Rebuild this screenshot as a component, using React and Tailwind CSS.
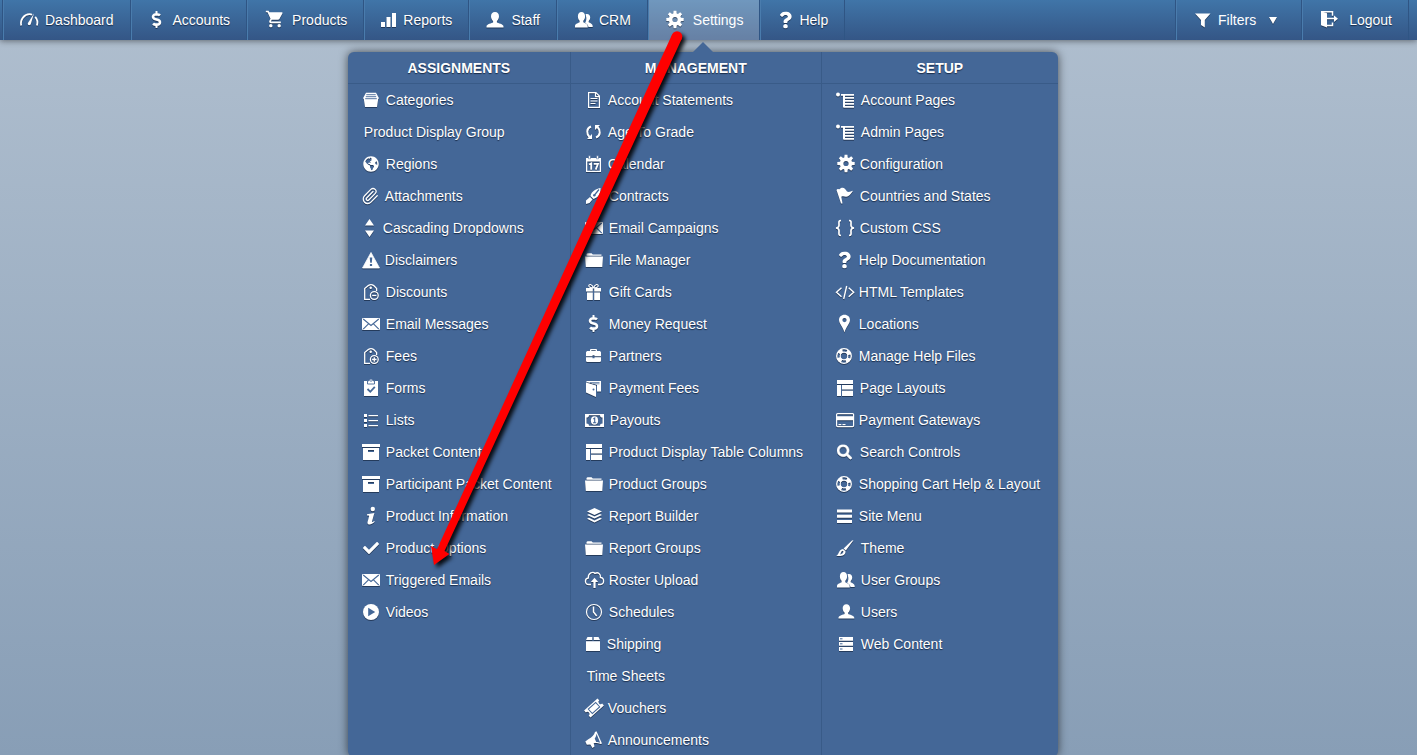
import React from "react";
import { Paperclip } from "lucide-react";
import {
  FaQuestion,
  FaDollarSign,
  FaCheck,
  FaGlobeAmericas,
  FaSearch,
} from "react-icons/fa";
import { MdShoppingCart } from "react-icons/md";

const PANEL = "#446797";

function Gear() {
  return (
    <g>
      <circle cx="9" cy="10" r="4.4" fill="none" stroke="currentColor" strokeWidth="3.6" />
      {[0, 45, 90, 135, 180, 225, 270, 315].map((a) => (
        <path key={a} d="M7.2 4.800L7.600 1.300h2.800L10.800 4.800z" fill="currentColor" transform={`rotate(${a} 9 10)`} />
      ))}
    </g>
  );
}

const PERSON =
  "M9 2c2.600 0 4 1.800 4 4.300 0 2-.9 3.900-2.100 4.800v1.500c1 .8 6.600 1.400 6.600 4v.9H.5v-.9c0-2.600 5.600-3.200 6.600-4v-1.500C5.900 10.200 5 8.300 5 6.300 5 3.800 6.400 2 9 2z";

const TAG = (
  <g>
    <path d="M8 17.300H2.700V6.500L6.300 3.600Q9 1.800 11.700 3.600L14.600 6.500V9" />
    <circle cx="8.700" cy="5.800" r="0.600" />
    <circle cx="12.300" cy="13.500" r="3.900" />
  </g>
);

const glyphs = {
  gauge: [
    18,
    <g key="g" fill="none" stroke="currentColor">
      <path d="M1.200 15.500C-.2 9.500 4.500 4.200 9.500 4.200c1.300 0 2 .2 2.600.5M15.200 6.800c2.200 2.400 2.600 5.800 1.700 8.700" strokeWidth="1.800" />
      <path d="M14 3.500L10.800 14c-.6 1.800-3.400 1.500-3-.7z" fill="currentColor" stroke="none" />
    </g>,
  ],
  dollar: [19, <FaDollarSign key="g" x="0" y="1" size="17" />],
  cart: [20, <MdShoppingCart key="g" x="1" y="-1" size="20" />],
  bars: [
    16,
    <path key="g" d="M0 12h4v5H0zM5.500 7h4v10h-4zM11 3h4v14h-4z" fill="currentColor" />,
  ],
  user: [20, <path key="g" d={PERSON} fill="currentColor" />],
  users: [
    20,
    <g key="g" fill="currentColor">
      <path d="M13 4c2 0 3.200 1.300 3.200 3.500 0 1.500-.6 2.800-1.500 3.500v1.200c.8.700 4 1.300 4 3.800v1h-4.200c-.2-2.600-2.400-3.500-3.600-4.100 1.500-1.400 2-5 .6-8.500.5-.3 1-.4 1.500-.4z" />
      <path d="M7.500 2c2.300 0 3.600 1.700 3.600 4.200 0 1.900-.8 3.700-1.800 4.600v1.500c.9.800 4.400 1.300 4.400 4v1.200H1v-1.200c0-2.700 3.700-3.200 4.600-4v-1.500C4.600 9.900 3.900 8.100 3.900 6.200 3.900 3.700 5.200 2 7.500 2z" />
    </g>,
  ],
  gear: [19, <g key="g" transform="translate(1 -0.500)"><Gear /></g>],
  question: [18, <FaQuestion key="g" x="0" y="1.500" size="17" />],
  funnel: [20, <path key="g" d="M2 3.500h15.500L11.800 10v7.500L8 15v-5z" fill="currentColor" />],
  logout: [
    21,
    <g key="g" fill="none" stroke="currentColor">
      <path d="M2 1.200l6 2v14.300l-6-2.200z" fill="currentColor" stroke="none" />
      <path d="M2 1.700h11.500v4M13.500 12.500v3H8M8 8.500h8.500" strokeWidth="1.500" />
      <path d="M15 5.500l4 3.200-4 3.300z" fill="currentColor" stroke="none" />
    </g>,
  ],
  tray: [
    19,
    <g key="g">
      <path d="M4 2.800h10l3 5.400-.8.800-1.200 8H3L1.800 9 1 8.200z" fill="currentColor" />
      <path d="M4.300 4.700h9.400M3.800 6.700h10.400M3.200 8.700h11.600" stroke={PANEL} strokeWidth="0.900" />
    </g>,
  ],
  globe: [19, <FaGlobeAmericas key="g" x="1" y="2" size="16" />],
  clip: [
    18,
    <g key="g" fill="none" stroke="currentColor">
      <Paperclip x="-1" y="1" width="18" height="18" strokeWidth="1.700" />
    </g>,
  ],
  sort: [16, <path key="g" d="M7.500 1l4.500 6.500H3zM7.500 19L3 12.500h9z" fill="currentColor" />],
  warning: [
    18,
    <g key="g">
      <path d="M9 2.500L17.500 18H.5z" fill="currentColor" stroke="currentColor" strokeWidth="0.800" strokeLinejoin="round" />
      <path d="M7.700 7.500h2.600l-.5 5.200H8.200zM7.900 14h2.200v2H7.900z" fill={PANEL} />
    </g>,
  ],
  tagMinus: [
    19,
    <g key="g" fill="none" stroke="currentColor" strokeWidth="1.300">
      {TAG}
      <path d="M10.200 13.500h4.200" />
    </g>,
  ],
  tagPlus: [
    19,
    <g key="g" fill="none" stroke="currentColor" strokeWidth="1.300">
      {TAG}
      <path d="M10.100 13.500h4.400M12.300 11.300v4.400" />
    </g>,
  ],
  mail: [
    19,
    <g key="g">
      <rect x="0" y="4" width="18" height="12" rx="1" fill="currentColor" />
      <path d="M1.200 5L9 11.500 16.800 5M1.200 15.200l5.300-5.400M16.800 15.200l-5.300-5.400" fill="none" stroke={PANEL} strokeWidth="1.100" />
    </g>,
  ],
  clipboard: [
    19,
    <g key="g">
      <path d="M2 3h14v15H2z" fill="currentColor" />
      <path d="M5.500 2.800h1.600a1.900 1.900 0 0 1 3.800 0h1.600V6h-7z" fill="currentColor" stroke={PANEL} strokeWidth="0.900" />
      <circle cx="9" cy="3" r="0.800" fill={PANEL} />
      <path d="M5.500 11l2.800 2.800 4.500-5" fill="none" stroke={PANEL} strokeWidth="1.800" />
    </g>,
  ],
  list: [
    19,
    <path key="g" d="M2 4h3v3H2zM2 9h3v3H2zM2 14h3v3H2zM6.500 5h9.500v1.200H6.500zM6.500 10h9.500v1.200H6.500zM6.500 15h9.500v1.200H6.500z" fill="currentColor" />,
  ],
  archive: [
    19,
    <g key="g" fill="currentColor">
      <path d="M0 2h18v3H0z" />
      <path fillRule="evenodd" d="M1 6h16v12H1zM6 8v2h6V8z" />
    </g>,
  ],
  info: [
    19,
    <g key="g" fill="currentColor">
      <circle cx="10.800" cy="3" r="2.200" />
      <path d="M5 8.300l7.400-1.400-2.400 8.600c-.2.800.5.700 2.200-.6l.5.900c-2.200 2.200-4 2.900-5.600 2.700-1.600-.2-1.900-1.400-1.500-2.800l1.500-5.400c.2-.8-.5-.9-2.100-.8z" />
    </g>,
  ],
  check: [19, <FaCheck key="g" x="1" y="2" size="16" />],
  play: [
    19,
    <g key="g">
      <circle cx="9" cy="10" r="8" fill="currentColor" />
      <path d="M6.200 5.700l7 4.300-7 4.300z" fill={PANEL} />
    </g>,
  ],
  doc: [
    18,
    <g key="g" fill="none" stroke="currentColor">
      <path d="M3.600 2.600h7.300l3.500 3.500v11.300H3.600zM10.500 2.600v4h4" strokeWidth="1.200" />
      <path d="M5.500 8.500h7M5.500 11h7M5.500 13.500h5" strokeWidth="1.200" />
    </g>,
  ],
  refresh: [
    18,
    <g key="g" fill="none" stroke="currentColor" strokeWidth="2">
      <path d="M6 4.500C1 6.500 1.500 12 4.500 15" />
      <path d="M11 15.500c5-2 4.500-7.500 1.500-10.500" />
      <path d="M2 17h5V12zM15 3H10V8z" fill="currentColor" stroke="none" />
    </g>,
  ],
  calendar: [
    18,
    <g key="g">
      <path fillRule="evenodd" d="M1 4h15v14H1zM2.300 7.500v9.200h12.400V7.500z" fill="currentColor" />
      <path d="M3.500 1.800h2v3h-2zM11.500 1.800h2v3h-2z" fill="currentColor" stroke={PANEL} strokeWidth="0.500" />
      <path d="M4 10.500l2.200-1.100v6.300M8.800 9.800h4.200l-2.300 5.900" fill="none" stroke="currentColor" strokeWidth="1.800" />
    </g>,
  ],
  pen: [
    19,
    <g key="g">
      <path d="M1 14.500l4-3.500 2.500 2.500L4.500 17 1 18zM5.500 10C6.500 5.500 9.500 3.500 15.500 2c.5 6-2.500 9.500-7 11z" fill="currentColor" />
      <path d="M14 3.500L9.500 9" stroke={PANEL} strokeWidth="1.200" />
      <circle cx="9.300" cy="9.200" r="1.200" fill={PANEL} />
    </g>,
  ],
  folder: [
    19,
    <path key="g" d="M1.500 5.500V4l1-.8h4L7.800 4.500H16.500v1.200H1.500zM0 6.500h18l-.7 10.500H.8z" fill="currentColor" />,
  ],
  gift: [
    19,
    <g key="g">
      <path d="M1 6h6.800v3.500H1zM9.200 6H16v3.500H9.200zM2 10.500h5.800V18H2zM9.200 10.500H15V18H9.200z" fill="currentColor" />
      <path d="M8.500 6C7 1.500 3.500 2 3.800 4c.2 1.300 2.500 1.800 4.700 2zM8.500 6C10 1.500 13.500 2 13.200 4c-.2 1.300-2.500 1.800-4.700 2z" fill="none" stroke="currentColor" strokeWidth="1.100" />
    </g>,
  ],
  briefcase: [
    19,
    <g key="g" fill="currentColor">
      <path fillRule="evenodd" d="M5 5V3.500L6 3h5l1 .5V5h3l1 1.200V10.300H9.500V9.300h-2v1H1V6.200L2 5zM6.300 4.200V5h4.400v-.8z" />
      <path d="M1 11.300h6.500v1h2v-1H16v3.900l-1 .8H2l-1-.8z" />
    </g>,
  ],
  wallet: [
    19,
    <g key="g">
      <path d="M1 4l1-1h14v10.500h-4V7L5 4.800z" fill="currentColor" />
      <path d="M1 4.500l10 3V19L1 14.500z" fill="currentColor" />
      <path d="M5 4.500h9.500M8 5.800h6.500" stroke={PANEL} strokeWidth="0.700" />
      <circle cx="8.500" cy="11.500" r="1" fill={PANEL} />
    </g>,
  ],
  cash: [
    20,
    <g key="g">
      <path fillRule="evenodd" d="M0 4h19v13H0zM4 5.300C4 6.700 3 7.600 1.500 7.600v5.800C3 13.400 4 14.300 4 15.700h11c0-1.400 1-2.300 2.500-2.300V7.600C16 7.600 15 6.700 15 5.300z" fill="currentColor" />
      <ellipse cx="9.500" cy="10.500" rx="3.600" ry="4.300" fill="currentColor" />
      <path d="M8.300 9l1.400-.9v4.400M8 12.800h3.200" fill="none" stroke={PANEL} strokeWidth="1.100" />
    </g>,
  ],
  layout: [
    19,
    <path key="g" d="M1 2h16v4H1zM1 7h4v11H1zM6 7h11v4.500H6zM6 12.700h11V18H6z" fill="currentColor" />,
  ],
  layers: [
    19,
    <g key="g" fill="currentColor">
      <path d="M9.500 2L17 5.500 9.500 9 2 5.500z" />
      <path d="M2 9l2-1 5.500 2.600L15 8l2 1-7.500 3.600zM2 12.800l2-1 5.500 2.600 5.500-2.600 2 1-7.500 3.700z" />
    </g>,
  ],
  upload: [
    19,
    <g key="g" fill="none" stroke="currentColor" strokeWidth="1.300">
      <path d="M6 14.500H4C-.6 14.500-.6 8.500 3.300 8 3 3 8 1 10 3.500c3-2 6 .5 5.400 4 4.300.2 4.200 7 0 7H13" />
      <path d="M9.500 18v-6.500" strokeWidth="2.200" />
      <path d="M5.800 12L9.500 7.800l3.700 4.200z" fill="currentColor" stroke="none" />
    </g>,
  ],
  clock: [
    19,
    <g key="g" fill="none" stroke="currentColor">
      <circle cx="9" cy="10" r="7.500" strokeWidth="1.200" />
      <path d="M8.500 4.500v5.500l3.200 4" strokeWidth="1.500" />
    </g>,
  ],
  box: [
    17,
    <path key="g" d="M2.500 3h4.800v3H1zM8.700 3h4.800L15 6H8.700zM1 7.200h14V17H1z" fill="currentColor" />,
  ],
  ticket: [
    18,
    <g key="g" transform="rotate(-42 9 10)">
      <path d="M0 5.200h18v2.600a1.800 1.800 0 0 0 0 4.400v2.600H0v-2.600a1.800 1.800 0 0 0 0-4.400z" fill="currentColor" />
      <rect x="4" y="7" width="10" height="6" fill="none" stroke={PANEL} strokeWidth="1" />
    </g>,
  ],
  horn: [
    18,
    <g key="g">
      <path d="M.3 11.500l3-2.300C7 7.500 9 5 10 2l1.500-.7L17 13.500l-1.300.5c-3-1-4.700-1.200-7-.8l.8 3.300-2 1.500-2.200-3.500-3.500.2z" fill="currentColor" />
      <path d="M11.500 3.800c-.3 2.500-.8 3.500-1.800 4.700l1.500 3.500c1.600 0 2.700.2 4 .7z" fill={PANEL} />
    </g>,
  ],
  tree: [
    20,
    <g key="g" fill="currentColor">
      <circle cx="2" cy="4.500" r="2" />
      <path d="M5 4h13v1.700H5zM7 5h2v12.500H7zM8 7h10v1.700H8zM8 10h10v1.700H8zM8 13h10v1.700H8zM8 16h10v1.700H8z" />
    </g>,
  ],
  flag: [19, <path key="g" d="M.5 4l1-1 2 .2C7-.2 9.500 3 11 5.500c2 1.200 4-.4 6-.7-2 3.400-4.500 6.200-7 6-1.500-.2-3-1-4.700 0L6.500 17.500H5z" fill="currentColor" />],
  braces: [
    19,
    <path key="g" d="M5 2.500C2 2.500 3.200 5 3 7.500 2.900 9 2 9.800 0 10c2 .2 2.900 1 3 2.500.2 2.500-1 5 2 5M13 2.500c3 0 1.800 2.500 2 5 .1 1.500 1 2.300 3 2.500-2 .2-2.900 1-3 2.500-.2 2.500 1 5-2 5" fill="none" stroke="currentColor" strokeWidth="1.700" />,
  ],
  code: [
    18,
    <path key="g" d="M5.500 5.800L.5 10.300l5 4.500M12.700 5.800l5 4.500-5 4.500M10.700 4L7.700 17" fill="none" stroke="currentColor" strokeWidth="1.400" />,
  ],
  pin: [
    18,
    <path key="g" fillRule="evenodd" d="M8.500.8c3.300 0 5.500 2.300 5.500 5.300 0 3.500-4 6.900-5.500 12.400C7 13 3 9.600 3 6.100 3 3.100 5.200.8 8.500.8zm0 3.200a2 2 0 1 0 0 4.200 2 2 0 0 0 0-4.200z" fill="currentColor" />,
  ],
  ring: [
    18,
    <g key="g" fill="none">
      <circle cx="8" cy="10" r="7.300" stroke="currentColor" strokeWidth="1.300" />
      <circle cx="8" cy="10" r="3.800" stroke="currentColor" strokeWidth="1.200" />
      <circle cx="8" cy="10" r="5.600" stroke="currentColor" strokeWidth="3.800" strokeDasharray="4.400 4.400" strokeDashoffset="-2.200" />
    </g>,
  ],
  card: [
    18,
    <g key="g">
      <rect x="0.600" y="3.600" width="17" height="13" rx="1" fill="none" stroke="currentColor" strokeWidth="1.200" />
      <path d="M1 6.200h16v4H1zM2.500 14h2.800v1.200H2.500zM6.500 14h3v1.200h-3z" fill="currentColor" />
    </g>,
  ],
  search: [19, <FaSearch key="g" x="1" y="2.500" size="15" stroke="currentColor" strokeWidth="14" />],
  menu: [
    18,
    <path key="g" d="M1 3.500h15v3H1zM1 8.700h15v3H1zM1 13.900h15v3H1z" fill="currentColor" />,
  ],
  brush: [
    20,
    <g key="g" fill="currentColor">
      <path d="M17.500 2.200L9.800 12.500 7.600 10.500 16 2.500z" />
      <path fillRule="evenodd" d="M7 11l2.500 2.300c.3 4-4 5.400-9.300 4.600C3.500 16.500 2 12 7 11zM6.500 12.800c-1.800.9-1.500 2.500-2.300 3.600 2-.2 3-1.200 3.300-2.800z" />
    </g>,
  ],
  person: [20, <path key="g" d={PERSON} transform="translate(2 0.300) scale(.93)" fill="currentColor" />],
  server: [
    20,
    <g key="g">
      <path d="M3 3h14v3.800H3zM3 8h14v3.800H3zM3 13h14v4H3z" fill="currentColor" />
      <path d="M4 4.800h2.500M4 9.800h2.500M4 15h2.500" stroke={PANEL} strokeWidth="1" />
    </g>,
  ],
};

function Glyph({ name }) {
  const [width, drawing] = glyphs[name];
  return (
    <svg
      aria-hidden="true"
      width={width}
      height="20"
      viewBox={`0 0 ${width} 20`}
      className="shrink-0 overflow-visible text-white [filter:drop-shadow(0_1px_0_rgba(20,35,60,0.65))]"
    >
      {drawing}
    </svg>
  );
}

const columns = [
  {
    title: "Assignments",
    items: [
      ["tray", "Categories"],
      [null, "Product Display Group"],
      ["globe", "Regions"],
      ["clip", "Attachments"],
      ["sort", "Cascading Dropdowns"],
      ["warning", "Disclaimers"],
      ["tagMinus", "Discounts"],
      ["mail", "Email Messages"],
      ["tagPlus", "Fees"],
      ["clipboard", "Forms"],
      ["list", "Lists"],
      ["archive", "Packet Content"],
      ["archive", "Participant Packet Content"],
      ["info", "Product Information"],
      ["check", "Product Options"],
      ["mail", "Triggered Emails"],
      ["play", "Videos"],
    ],
  },
  {
    title: "Management",
    items: [
      ["doc", "Account Statements"],
      ["refresh", "Age To Grade"],
      ["calendar", "Calendar"],
      ["pen", "Contracts"],
      ["mail", "Email Campaigns"],
      ["folder", "File Manager"],
      ["gift", "Gift Cards"],
      ["dollar", "Money Request"],
      ["briefcase", "Partners"],
      ["wallet", "Payment Fees"],
      ["cash", "Payouts"],
      ["layout", "Product Display Table Columns"],
      ["folder", "Product Groups"],
      ["layers", "Report Builder"],
      ["folder", "Report Groups"],
      ["upload", "Roster Upload"],
      ["clock", "Schedules"],
      ["box", "Shipping"],
      [null, "Time Sheets"],
      ["ticket", "Vouchers"],
      ["horn", "Announcements"],
    ],
  },
  {
    title: "Setup",
    items: [
      ["tree", "Account Pages"],
      ["tree", "Admin Pages"],
      ["gear", "Configuration"],
      ["flag", "Countries and States"],
      ["braces", "Custom CSS"],
      ["question", "Help Documentation"],
      ["code", "HTML Templates"],
      ["pin", "Locations"],
      ["ring", "Manage Help Files"],
      ["layout", "Page Layouts"],
      ["card", "Payment Gateways"],
      ["search", "Search Controls"],
      ["ring", "Shopping Cart Help & Layout"],
      ["menu", "Site Menu"],
      ["brush", "Theme"],
      ["users", "User Groups"],
      ["person", "Users"],
      ["server", "Web Content"],
    ],
  },
];

const navItem =
  "flex h-10 items-center gap-[5px] border-r border-l border-r-[#2f5584] border-l-[#4a7cad] px-4 whitespace-nowrap";

const iconBox = {
  narrow: "flex w-[17px]",
  normal: "flex w-5",
  wide: "flex w-[23px]",
  extra: "flex w-[25px]",
};

function NavIcon({ name, size = "normal" }) {
  return (
    <span className={iconBox[size]}>
      <Glyph name={name} />
    </span>
  );
}

function NavLink({ icon, label, size }) {
  return (
    <a href="#" className={navItem}>
      <NavIcon name={icon} size={size} />
      <span>{label}</span>
    </a>
  );
}

function PointerArrow() {
  return (
    <svg
      aria-hidden="true"
      width="710"
      height="704"
      viewBox="348 52 710 704"
      className="pointer-events-none absolute top-0 left-0 overflow-visible"
    >
      <g fill="#ff0000" className="[filter:drop-shadow(3px_3px_2px_rgba(0,0,0,0.9))]">
        <circle cx="677" cy="36.500" r="5.300" />
        <path d="M681.800 38.700L444.500 551l5 3L434 565l-3-19 6 3.300L672.200 34.300z" />
      </g>
    </svg>
  );
}

function SettingsMenu() {
  return (
    <div className="absolute top-full -left-[300px] z-10 mt-3">
      <svg aria-hidden="true" width="20" height="10" viewBox="0 0 20 10" className="absolute -top-[10px] left-1/2 -translate-x-1/2">
        <path d="M0 10L10 0l10 10z" fill={PANEL} />
      </svg>
      <div className="grid grid-cols-[223px_251px_236px] rounded-md bg-[#446797] pb-px shadow-[0_0_10px_rgba(0,0,0,0.6)]">
        {columns.map((column) => (
          <section key={column.title} className="border-r border-[#395b88] last:border-r-0">
            <h2 className="flex h-8 items-center justify-center border-b border-[#395b88] font-bold uppercase">
              {column.title}
            </h2>
            <ul className="pl-[14px]">
              {column.items.map(([icon, label]) => (
                <li key={label}>
                  <a href="#" className="flex h-8 items-center gap-[5px] whitespace-nowrap">
                    {icon && <Glyph name={icon} />}
                    <span className={icon ? "" : "pl-[2px]"}>{label}</span>
                  </a>
                </li>
              ))}
            </ul>
          </section>
        ))}
      </div>
      <PointerArrow />
    </div>
  );
}

export default function App() {
  return (
    <div className="min-h-screen overflow-x-hidden bg-linear-to-b from-[#b0bfcf] to-[#889eb6] font-['Liberation_Sans',Arial,sans-serif] text-sm text-white [text-shadow:0_1px_1px_rgba(15,30,55,0.8)]">
      <header className="relative bg-linear-to-b from-[#4075a8] to-[#345686] shadow-[0_1px_6px_rgba(0,0,0,0.45)]">
        <nav aria-label="Main" className="flex justify-between pr-2 pl-[2px]">
          <div className="flex border-l border-[#2f5584]">
            <NavLink icon="gauge" label="Dashboard" />
            <NavLink icon="dollar" label="Accounts" />
            <NavLink icon="cart" label="Products" size="wide" />
            <NavLink icon="bars" label="Reports" size="narrow" />
            <NavLink icon="user" label="Staff" />
            <NavLink icon="users" label="CRM" />
            <div className="relative">
              <button type="button" aria-expanded="true" className={`${navItem} bg-white/25`}>
                <NavIcon name="gear" size="wide" />
                <span>Settings</span>
              </button>
              <SettingsMenu />
            </div>
            <NavLink icon="question" label="Help" size="narrow" />
          </div>
          <div className="flex border-l border-[#2f5584]">
            <button type="button" className={navItem}>
              <NavIcon name="funnel" />
              <span>Filters</span>
              <svg aria-hidden="true" width="8" height="7" viewBox="0 0 8 7" className="mx-2 [filter:drop-shadow(0_1px_0_rgba(20,35,60,0.65))]">
                <path d="M0 0h8L4 7z" fill="currentColor" />
              </svg>
            </button>
            <NavLink icon="logout" label="Logout" size="extra" />
          </div>
        </nav>
      </header>
    </div>
  );
}
